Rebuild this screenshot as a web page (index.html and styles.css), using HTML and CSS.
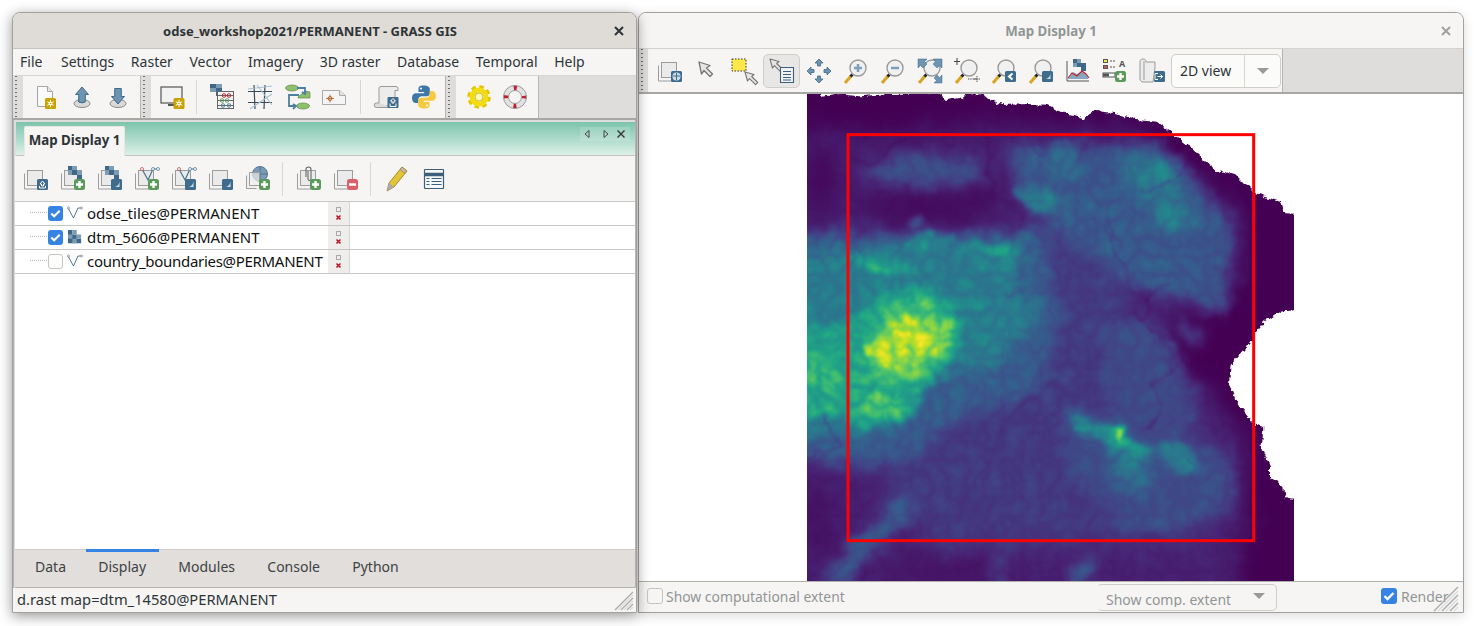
FILE: index.html
```html
<!DOCTYPE html>
<html lang="en">
<head>
<meta charset="utf-8">
<title>GRASS GIS</title>
<link rel="stylesheet" href="styles.css">
</head>
<body>
<svg class="sprite" width="0" height="0" aria-hidden="true">
  <defs>
    <g id="layers"><path d="M1.5 7.5v15.5h14" fill="none" stroke="#9c9c9c"/><rect x="4.5" y="4.5" width="15" height="15" fill="#ebebeb" stroke="#9c9c9c"/></g>
    <g id="checker"><path d="M8 0h9v4h5v9h-5V9H8z" fill="#3e6788"/><path d="M12 0h5v4h-5zM17 4h5v5h-5zM8 4h4v5H8z" fill="#7d9cb3"/></g>
    <g id="vec"><path d="M8 3l6 11 5-11h5" fill="none" stroke="#45708f" stroke-width="1.2"/><circle cx="8" cy="3" r="1.5" fill="#fff" stroke="#b04040" stroke-width=".7"/><circle cx="19" cy="3" r="1.5" fill="#fff" stroke="#45708f" stroke-width=".7"/><circle cx="24" cy="3" r="1.5" fill="#fff" stroke="#45708f" stroke-width=".7"/></g>
    <g id="plus"><rect x="14" y="13" width="11" height="11" rx="2.5" fill="#5c9a5c"/><path d="M19.5 15v7M16 18.500h7" stroke="#fff" stroke-width="2.4"/></g>
    <g id="minus"><rect x="14" y="13" width="11" height="11" rx="2.5" fill="#d9606a"/><path d="M16 18.500h7" stroke="#fff" stroke-width="2.400"/></g>
    <g id="bluebadge"><rect x="14" y="13" width="11" height="11" rx="1.500" fill="#3f6b8c"/></g>
    <g id="theme"><use href="#bluebadge"/><path d="M16 21c4 0 6-2 6.500-6v6z" fill="#cfdde7"/></g>
    <g id="upbadge"><use href="#bluebadge"/><path d="M19.500 15l2.500 3h-1.500v2h-2v-2H17zM16.500 20v2h6v-2" fill="none" stroke="#fff"/></g>
    <g id="gold"><rect x="0" y="0" width="11" height="11" rx="1.500" fill="#c9a100"/><path d="M5.500 1.800v7.400M2.300 3.600l6.400 3.800M8.700 3.600L2.300 7.400" stroke="#fff" stroke-width="1"/><circle cx="5.500" cy="5.500" r="1.800" fill="#fff"/><circle cx="5.500" cy="5.500" r=".8" fill="#c9a100"/></g>
    <g id="mag"><path d="M2 25l6-7" stroke="#d9a520" stroke-width="3"/><path d="M7.500 18.500l2-2" stroke="#222" stroke-width="3"/><circle cx="15" cy="10" r="8" fill="#f0f0f0" stroke="#9a9a9a" stroke-width="1.400"/></g>
    <g id="pointer"><path d="M1 1l9 2.500-2.300 2 6 6-2.200 2.200-6-6L3.500 10z" fill="#e6e6e6" stroke="#757575" stroke-width="1.100" stroke-linejoin="round"/></g>
    <g id="tinyflags"><rect x="3.500" y=".5" width="4" height="4" fill="#efefef" stroke="#aaa"/><rect x="3" y="8" width="5" height="5" fill="#eee"/><path d="M3.500 8.500l4 4M7.500 8.500l-4 4" stroke="#c8101a" stroke-width="1.500"/></g>
    <g id="vecmini"><path d="M1 2l5.500 10L11 2h3" fill="none" stroke="#50788f" stroke-width="1"/><circle cx="1.500" cy="2" r="1" fill="#fff" stroke="#666" stroke-width=".6"/><circle cx="14.500" cy="2" r="1" fill="#fff" stroke="#666" stroke-width=".6"/></g>

    <filter id="b34" x="-40%" y="-40%" width="180%" height="180%" color-interpolation-filters="sRGB"><feGaussianBlur stdDeviation="34"/></filter>
    <filter id="b20" x="-40%" y="-40%" width="180%" height="180%" color-interpolation-filters="sRGB"><feGaussianBlur stdDeviation="20"/></filter>
    <filter id="b11" x="-40%" y="-40%" width="180%" height="180%" color-interpolation-filters="sRGB"><feGaussianBlur stdDeviation="11"/></filter>
    <filter id="b6" x="-40%" y="-40%" width="180%" height="180%" color-interpolation-filters="sRGB"><feGaussianBlur stdDeviation="6"/></filter>
    <filter id="b2" x="-40%" y="-40%" width="180%" height="180%" color-interpolation-filters="sRGB"><feGaussianBlur stdDeviation="2.500"/></filter>

    <filter id="dem" filterUnits="userSpaceOnUse" x="-80" y="-80" width="1660" height="1660" color-interpolation-filters="sRGB">
      <feTurbulence type="fractalNoise" baseFrequency=".012" numOctaves="5" seed="11" result="warp"/>
      <feDisplacementMap in="SourceGraphic" in2="warp" scale="55" xChannelSelector="R" yChannelSelector="G" result="shape"/>
      <feTurbulence type="turbulence" baseFrequency=".018" numOctaves="4" seed="5"/>
      <feColorMatrix type="matrix" values="1 0 0 0 0  1 0 0 0 0  1 0 0 0 0  0 0 0 0 1" result="veins"/>
      <feComposite in="shape" in2="veins" operator="arithmetic" k1=".5" k2=".86" k3="0" k4="0"/>
      <feGaussianBlur stdDeviation="2.600"/>
      <feComponentTransfer>
        <feFuncR type="table" tableValues=".267 .282 .255 .208 .165 .129 .133 .267 .478 .741 .992"/>
        <feFuncG type="table" tableValues=".004 .141 .267 .373 .471 .569 .659 .749 .820 .875 .906"/>
        <feFuncB type="table" tableValues=".329 .459 .529 .553 .557 .549 .518 .439 .318 .149 .145"/>
      </feComponentTransfer>
    </filter>
    <filter id="coastline" filterUnits="userSpaceOnUse" x="-40" y="-40" width="1600" height="1600">
      <feTurbulence type="fractalNoise" baseFrequency=".05" numOctaves="3" seed="2"/>
      <feDisplacementMap in="SourceGraphic" scale="22" xChannelSelector="R" yChannelSelector="G"/>
    </filter>
    <mask id="land" maskUnits="userSpaceOnUse" x="0" y="0" width="1500" height="1500">
      <path filter="url(#coastline)" fill="#fff" d="M-30-30L60-30 60 17 110 12 180 19 250 13 420 8 440 30 490 22 505 8 545 14 610 45 680 42 740 44 790 70 850 85 880 62 950 70 1010 90 1070 95 1120 135 1180 180 1250 240 1310 260 1360 310 1440 335 1450 370 1530 372 1530 655 1440 665 1390 700 1340 770 1295 825 1290 880 1310 940 1360 1000 1390 1015 1385 1070 1410 1130 1410 1165 1450 1190 1455 1225 1530 1228 1530 1530-30 1530z"/>
    </mask>
  </defs>
</svg>

<section class="window map-window">
  <header class="titlebar titlebar-light">
    <span class="title-dim">Map Display 1</span>
    <svg class="close" viewBox="0 0 10 10"><path d="M1 1l8 8M9 1l-8 8" stroke="#a0a0a0" stroke-width="2"/></svg>
  </header>
  <div class="toolrow map-toolrow">
    <div class="toolbar map-toolbar">
      <i class="grip"></i>
      <span class="tool first"><svg viewBox="0 0 26 26"><g transform="translate(-1 0)"><use href="#layers"/><use href="#bluebadge"/><circle cx="19.500" cy="18.500" r="4" fill="#cfdde7"/><path d="M16 18h7M19.500 15v7" stroke="#3f6b8c"/></g></svg></span>
      <span class="tool"><svg viewBox="0 0 26 26"><path d="M4 4l11 3.500-3.500 2.500 6 6-2.500 2.500-6-6-2.500 3.500z" fill="#e6e6e6" stroke="#757575" stroke-width="1.300" stroke-linejoin="round"/></svg></span>
      <span class="tool"><svg viewBox="0 0 26 26"><rect x="0" y="1" width="14" height="12" fill="#ffe94a" stroke="#333" stroke-dasharray="1.500 1.500"/><g transform="translate(12 13)"><use href="#pointer"/></g></svg></span>
      <span class="tool active"><svg viewBox="0 0 26 26"><use href="#pointer"/><path d="M11.500 9.500h13v15h-13zM14 13.500h8M14 16.500h8M14 19.500h8M14 22h8" fill="#f2f2f2" stroke="#3d5f7a" stroke-width="1.100"/></svg></span>
      <span class="tool"><svg viewBox="0 0 26 26"><path d="M13 1l4 4h-2.500v3h-3V5H9zM13 25l4-4h-2.500v-3h-3v3H9zM1 13l4-4v2.500h3v3H5V17zM25 13l-4-4v2.500h-3v3h3V17z" fill="#6d94b0" stroke="#3f6b8c" stroke-width=".8"/></svg></span>
      <span class="tool"><svg viewBox="0 0 26 26"><use href="#mag"/><path d="M15 6v8M11 10h8" stroke="#7ca0ba" stroke-width="2.500"/></svg></span>
      <span class="tool"><svg viewBox="0 0 26 26"><use href="#mag"/><path d="M11 10h8" stroke="#7ca0ba" stroke-width="2.500"/></svg></span>
      <span class="tool"><svg viewBox="0 0 26 26"><use href="#mag"/><path d="M2 1h8L7.500 3.500 10 6 6 10 3.500 7.500 1 10V1zM25 1v9l-2.500-2.500L20 10l-4-4 2.500-2.500L16 1zM25 25h-8l2.500-2.500L17 20l3-3 2.500 2.500L25 17z" fill="#6d94b0" stroke="#3f6b8c" stroke-width=".5"/></svg></span>
      <span class="tool"><svg viewBox="0 0 26 26"><use href="#mag"/><path d="M2 0v7M-1 3.500h6" stroke="#444" transform="translate(1 0)"/><path d="M14 21h9M23 18v6M20 21h6" stroke="#444" stroke-dasharray="1 .7"/></svg></span>
      <span class="tool"><svg viewBox="0 0 26 26"><use href="#mag"/><rect x="14" y="13" width="11" height="11" rx="1.500" fill="#3f6b8c"/><path d="M21.500 15.500L18 18.500l3.500 3" fill="none" stroke="#fff" stroke-width="2"/></svg></span>
      <span class="tool"><svg viewBox="0 0 26 26"><use href="#mag"/><use href="#theme"/></svg></span>
      <span class="tool"><svg viewBox="0 0 26 26"><path d="M2 3v20h22" fill="none" stroke="#555"/><path d="M8 1h8v4h5v8h-5V9H8z" fill="#3e6788"/><path d="M12 1h4v4h-4zM8 5h4v4H8z" fill="#7d9cb3"/><path d="M3 21l5-7 4 2 5-3 4 3 2 3v2H3z" fill="#86a7c0"/><path d="M3 20l4-5 5 3 5-5 4 3 3 4" fill="none" stroke="#c8202a" stroke-width="1.100"/></svg></span>
      <span class="tool"><svg viewBox="0 0 26 26"><rect x="1.500" y="1.500" width="4" height="3" fill="#ffe94a" stroke="#555"/><rect x="1.500" y="7.500" width="4" height="3" fill="#c85a5a" stroke="#555"/><path d="M8 3h5M8 9h5" stroke="#555" stroke-dasharray="2 1"/><text class="legend-a" x="20" y="9">A</text><rect x="1" y="15" width="12" height="4" fill="#fff" stroke="#555"/><rect x="1" y="15.500" width="6" height="3" fill="#555"/><use href="#plus" transform="translate(-1 0)"/></svg></span>
      <span class="tool"><svg viewBox="0 0 26 26"><path d="M4 1c-2 0-3 1-3 3v17c0 2 2 3 3 3h10l2-14V4H7C7 2 6 1 4 1z" fill="#ececec" stroke="#999"/><path d="M5 3v19" stroke="#999"/><use href="#bluebadge" transform="translate(1 0)"/><path d="M19 15.500h-3v6h3M18.500 18.500h5M21.500 16.500l2 2-2 2" fill="none" stroke="#fff"/></svg></span>
      <div class="combo view-combo"><span class="combo-value">2D view</span><span class="combo-drop"><b class="arrow"></b></span></div>
    </div>
  </div>
  <div class="map-canvas">
    <svg class="dem" viewBox="21 12 1461 1461" role="img" aria-label="Elevation map">
      <g mask="url(#land)">
        <g filter="url(#dem)">
          <rect x="-80" y="-80" width="1660" height="1660" fill="#000"/>
          <g filter="url(#b34)">
            <path d="M-40 120l340 10 260-30 440 20 300 220 40 120-40 170-160 20-60 140 140 100 120 160v260l-40 213H-40z" fill="#161616"/>
            <path d="M350 880l500-130 300 170 130 220-60 210-800 30-180-180z" fill="#2a2a2a"/>
            <path d="M640 420l300-60 60 400-330 120z" fill="#2c2c2c"/>
          </g>
          <g filter="url(#b20)">
            <path d="M620 170h480l210 260-80 220-230-50-170-130-160-130z" fill="#444"/>
            <path d="M170 250l120-50 240 0 30 80-170 30z" fill="#3c3c3c"/>
            <path d="M-40 430l520 0 240 0 60 270-60 200-270 100-100 100-150 40-240-50z" fill="#484848"/>
            <path d="M790 960l320 50 180 90-20 190-270 40-190-180z" fill="#3a3a3a"/>
            <path d="M880 720l180-40 100 200 30 130-240-40z" fill="#383838"/>
            <path d="M130 1390l160-170 80-10-140 170-100 110H60z" fill="#484848"/>
            <path d="M1210 520l100 70-60 90-40-40z" fill="#3c3c3c"/>
            <path d="M810 1500l40-90 30 0-20 90z" fill="#585858"/>
            <path d="M570 1500l20-120 25 0-10 120z" fill="#3e3e3e"/>
            <path d="M1140 680l70 50-10 40-60-30z" fill="#383838"/>
          </g>
          <g filter="url(#b34)">
            <ellipse cx="380" cy="345" rx="230" ry="38" fill="#040404"/>
            <ellipse cx="60" cy="260" rx="55" ry="100" fill="#050505"/>
            <ellipse cx="50" cy="1300" rx="60" ry="110" fill="#0c0c0c"/>
            <ellipse cx="440" cy="1440" rx="190" ry="35" fill="#0c0c0c"/>
          </g>
          <g filter="url(#b20)">
            <path d="M-40 470l190 20 330-40 210 0-50 110 90 120-150 150-210 30-90 160-330 30z" fill="#686868"/>
            <path d="M800 990l50-30 110 50 120 60-30 130-80 20-70-180z" fill="#565656"/>
            <path d="M960 180l110 20 70 90 60 130-90 25-60-100-90-60z" fill="#606060"/>
          </g>
          <g filter="url(#b11)">
            <path d="M650 290l110-10 30 70-110 20z" fill="#666"/>
            <path d="M740 170l100 0 20 90-100 10z" fill="#545454"/>
            <path d="M1040 210l60 20 20 50-70 10z" fill="#6e6e6e"/>
            <path d="M1070 360l50-10 30 50-50 10z" fill="#6e6e6e"/>
            <path d="M320 395l50-15 10 25-50 10z" fill="#4a4a4a"/>
            <path d="M1080 1050l70 10 40 50-50 60-50-50z" fill="#626262"/>
          </g>
          <g filter="url(#b11)">
            <path d="M-40 720l170-20 120-80 130-50 90 90 20 120-100 100-70 100-130 40-80-50-170 20z" fill="#909090"/>
            <path d="M160 490l50-10 60 45 90 0 0 18-110 8-90-10z" fill="#8a8a8a"/>
            <path d="M310 452l150-20-20 22-120 16z" fill="#868686"/>
            <path d="M540 472l110-12 10 20-120 16z" fill="#868686"/>
            <path d="M820 975l50 20 90 35 90 45-20 15-100-25-100-50z" fill="#808080"/>
            <path d="M990 1060l35 15-10 70-35-10z" fill="#707070"/>
            <path d="M1130 1070l25 10 5 50-35 15z" fill="#727272"/>
            <path d="M-40 800l160-25 10 120-170 15z" fill="#a0a0a0"/>
          </g>
          <g filter="url(#b11)">
            <path d="M180 750l75-95 125-20 75 60-10 90-85 75-105 30-55-50z" fill="#b4b4b4"/>
            <path d="M200 905l75 10 35 40-60 30-55-35z" fill="#b0b0b0"/>
            <path d="M190 528l130-2 15 12-130 10z" fill="#a2a2a2"/>
            <path d="M595 478l40-10 10 12-40 12z" fill="#a8a8a8"/>
            <path d="M915 1015l50 10 50 35-15 12-80-35z" fill="#a4a4a4"/>
          </g>
          <g filter="url(#b6)">
            <path d="M250 710l45-35 85 15 70 12-20 75-90 55-70 20-60-55 10-55z" fill="#d2d2d2"/>
          </g>
          <g filter="url(#b6)">
            <path d="M270 728l55-20 65 12-55 40-55 8z" fill="#eee"/>
            <ellipse cx="208" cy="790" rx="30" ry="24" fill="#e2e2e2"/>
            <ellipse cx="960" cy="1035" rx="14" ry="12" fill="#d0d0d0"/>
          </g>
          <g filter="url(#b2)">
            <ellipse cx="312" cy="731" rx="26" ry="11" fill="#fff"/>
            <ellipse cx="365" cy="725" rx="18" ry="7" fill="#f4f4f4"/>
          </g>
          <g fill="none" stroke="#000" stroke-opacity=".4" stroke-width="6" filter="url(#b2)">
            <path d="M545 130l20 60 10 80-10 60M690 130l20 80M860 140l-10 70"/>
            <path d="M925 340l15 80 10 60 20 70 20 50 60 40 50-70M1000 665l60 50 60 60 20 30-50 60-30 20 20 70-40 50"/>
            <path d="M1180 180l-30 60-60 50-80 10"/>
            <path d="M760 880l-100 80-60 60-20 60-60 110-50 100" stroke-opacity=".2"/>
            <path d="M60 970l30 50 20 50-60 30-30 10M150 200l60 30 40-40 80-50"/>
            <path d="M620 610l60-20M1050 610l10 50-30 40"/>
          </g>
        </g>
      </g>
      <rect class="region" x="144" y="134" width="1217" height="1218"/>
    </svg>
  </div>
  <footer class="statusbar map-status">
    <label class="check-label dim"><i class="check off dim-check"></i>Show computational extent</label>
    <div class="combo extent-combo"><span class="extent-clip">Show comp. extent</span><b class="arrow extent-arrow"></b></div>
    <label class="check-label render"><i class="check on"><svg viewBox="0 0 16 16"><path d="M3.500 8l3 3 6-6" fill="none" stroke="#fff" stroke-width="2.300"/></svg></i>Render</label>
    <svg class="grip-corner" viewBox="0 0 26 26"><path d="M1 25L25 1M9 25L25 9M17 25l8-8" stroke="#a9a9a9" stroke-width="1.300"/><path d="M5 25L25 5M13 25l12-12M21 25l4-4" stroke="#dcdcdc" stroke-width="1.300"/></svg>
  </footer>
</section>

<section class="window main-window">
  <header class="titlebar">
    <span class="title-main">odse_workshop2021/PERMANENT - GRASS GIS</span>
    <svg class="close" viewBox="0 0 10 10"><path d="M1 1l8 8M9 1l-8 8" stroke="#2e3436" stroke-width="2"/></svg>
  </header>
  <nav class="menubar">
    <span>File</span><span>Settings</span><span>Raster</span><span>Vector</span><span>Imagery</span><span>3D raster</span><span>Database</span><span>Temporal</span><span>Help</span>
  </nav>
  <div class="toolrow main-toolrow">
    <div class="toolbar tb-a">
      <i class="grip"></i>
      <span class="tool first"><svg viewBox="0 0 26 26"><path d="M4.500 2.500h10l5 5v15h-15z" fill="#fafafa" stroke="#a5a5a5"/><path d="M14.500 2.500v5h5" fill="#e5e5e5" stroke="#a5a5a5"/><use href="#gold" transform="translate(12 14)"/></svg></span>
      <span class="tool"><svg viewBox="0 0 26 26"><ellipse cx="13" cy="19.500" rx="8" ry="4" fill="#d9d9d9" stroke="#8a8a8a"/><path d="M13 3l6.500 7.500h-3.200v7.500q-3.300 1.800-6.600 0v-7.500H6.500z" fill="#6d94b0" stroke="#3f6b8c"/></svg></span>
      <span class="tool"><svg viewBox="0 0 26 26"><ellipse cx="13" cy="19.500" rx="8" ry="4" fill="#d9d9d9" stroke="#8a8a8a"/><path d="M13 20l6.500-7.500h-3.200V4.500h-6.600v8H6.500z" fill="#6d94b0" stroke="#3f6b8c"/></svg></span>
    </div>
    <div class="toolbar tb-b">
      <i class="grip"></i>
      <span class="tool second"><svg viewBox="0 0 26 26"><rect x="2" y="3" width="21" height="16" fill="#f2f2f2" stroke="#555" stroke-width="1.200"/><path d="M9 21h7" stroke="#555" stroke-width="2"/><use href="#gold" transform="translate(14.500 14)"/></svg></span>
      <i class="sep"></i>
      <span class="tool"><svg viewBox="0 0 26 26"><path d="M1 0h6v4h6v8H7V8H1z" fill="#3e6788"/><path d="M7 0h6v4H7zM1 4h6v4H1z" fill="#7d9cb3"/><rect x="8.500" y="7.500" width="16" height="17" fill="#f3f3f3" stroke="#666"/><path d="M9 11.500h15M9 16.500h15M9 21.500h15" stroke="#666"/><circle cx="15" cy="11.500" r="1.800" fill="none" stroke="#c8202a"/><circle cx="20" cy="11.500" r="1.800" fill="none" stroke="#c8202a"/><circle cx="13" cy="16.500" r="1.800" fill="none" stroke="#68a468"/><circle cx="18" cy="16.500" r="1.800" fill="none" stroke="#68a468"/><circle cx="14" cy="21.500" r="1.800" fill="none" stroke="#5585aa"/><circle cx="20" cy="21.500" r="1.800" fill="none" stroke="#5585aa"/></svg></span>
      <span class="tool"><svg viewBox="0 0 26 26"><g transform="translate(1 0)"><path d="M7 1l1 24M18 1l-1 24M1 7.500h24M1 18.500h24" stroke="#3a4a55" stroke-width="1.200"/><path d="M1 5l24-3M3 25L25 10M10 1l15 20" stroke="#a7c2d4" stroke-width="1.100"/></g></svg></span>
      <span class="tool"><svg viewBox="0 0 26 26"><g transform="translate(1 0)"><ellipse cx="7" cy="4" rx="6.500" ry="3" fill="#8ec06c" stroke="#5c8a45" stroke-width=".7"/><path d="M13 14h12v-6l-5-1-7 6z" fill="#8ec06c" stroke="#5c8a45" stroke-width=".7"/><ellipse cx="18" cy="22" rx="6.500" ry="3" fill="#8ec06c" stroke="#5c8a45" stroke-width=".7"/><path d="M12 4h8v6M21 7l-1 3-3-2M14 11H4v11h6M8 20l3 2-3 3" fill="none" stroke="#4f7fa3" stroke-width="1.800"/></g></svg></span>
      <span class="tool"><svg viewBox="0 0 26 26"><path d="M1.500 6.500h17l6 5v9h-23z" fill="#f5f5f5" stroke="#aaa"/><path d="M18.500 6.500v5h6" fill="#e5e5e5" stroke="#aaa"/><circle cx="9" cy="14.500" r="2" fill="none" stroke="#b5642a"/><path d="M9 10.500v8M5 14.500h8" stroke="#b5642a" stroke-width=".8"/></svg></span>
      <i class="sep wide"></i>
      <span class="tool"><svg viewBox="0 0 26 26"><path d="M7 2.500h15a2 2 0 0 1 2 2v2h-3v15H5v-17a2 2 0 0 1 2-2z" fill="#ececec" stroke="#999"/><path d="M5 19H2.500a2 2 0 0 0 0 4.500H20" fill="#ddd" stroke="#999"/><rect x="13.500" y="13" width="11" height="11" rx="1" fill="#3f6b8c"/><path d="M19 14.500l2.500 2.500h-1.500v2h-2v-2h-1.500zM16 19.500v3h6v-3" fill="none" stroke="#fff"/></svg></span>
      <span class="tool"><svg viewBox="0 0 26 26"><path d="M13 1.500c-5.500 0-5.500 2-5.500 3.500v3h5.700v1.200H5c-2.500 0-4 1.800-4 4.800s1.500 5 4 5h2.300v-3.200c0-2 1.600-3.500 3.500-3.500h5c1.700 0 3-1.300 3-3V5c0-2.200-2.500-3.500-5.800-3.500z" fill="#3f76a8"/><path d="M13 24.500c5.500 0 5.500-2 5.500-3.500v-3h-5.700v-1.200H21c2.500 0 4-1.800 4-4.800s-1.500-5-4-5h-2.300v3.200c0 2-1.600 3.500-3.500 3.500h-5c-1.700 0-3 1.300-3 3V21c0 2.200 2.500 3.500 5.800 3.500z" fill="#f7c93e"/><circle cx="10" cy="4.500" r="1" fill="#fff"/><circle cx="16" cy="21.500" r="1" fill="#fff"/></svg></span>
    </div>
    <div class="toolbar tb-c">
      <i class="grip"></i>
      <span class="tool third"><svg viewBox="0 0 26 26"><circle cx="13" cy="13" r="10" fill="none" stroke="#e3c400" stroke-width="3.500" stroke-dasharray="4.400 3.450"/><circle cx="13" cy="13" r="7" fill="none" stroke="#f3dc10" stroke-width="5"/><circle cx="13" cy="13" r="4" fill="#fff9b8" stroke="#b8a200" stroke-width=".7"/></svg></span>
      <span class="tool"><svg viewBox="0 0 26 26"><circle cx="13" cy="13" r="9" fill="none" stroke="#e2e2e2" stroke-width="5"/><circle cx="13" cy="13" r="9" fill="none" stroke="#c0202a" stroke-width="5" stroke-dasharray="3 11.140" stroke-dashoffset="1.500"/><circle cx="13" cy="13" r="11.500" fill="none" stroke="#999"/><circle cx="13" cy="13" r="6.500" fill="none" stroke="#999"/></svg></span>
    </div>
  </div>

  <div class="notebook-body">
    <div class="aui-head">
      <div class="aui-tab">Map Display 1</div>
      <div class="aui-ctrls">
        <svg viewBox="0 0 6 8"><path d="M5 .5v7L1 4z" fill="none" stroke="#444"/></svg>
        <svg viewBox="0 0 6 8"><path d="M1 .5v7L5 4z" fill="none" stroke="#444"/></svg>
        <svg viewBox="0 0 8 8"><path d="M.5.500l7 7M7.500.500l-7 7" stroke="#333" stroke-width="1.400"/></svg>
      </div>
    </div>
    <div class="layer-toolbar">
      <span class="tool"><svg viewBox="0 0 26 26"><use href="#layers"/><use href="#upbadge"/></svg></span>
      <span class="tool"><svg viewBox="0 0 26 26"><use href="#layers"/><use href="#checker"/><use href="#plus"/></svg></span>
      <span class="tool"><svg viewBox="0 0 26 26"><use href="#layers"/><use href="#checker"/><use href="#theme"/></svg></span>
      <span class="tool"><svg viewBox="0 0 26 26"><use href="#layers"/><use href="#vec"/><use href="#plus"/></svg></span>
      <span class="tool"><svg viewBox="0 0 26 26"><use href="#layers"/><use href="#vec"/><use href="#theme"/></svg></span>
      <span class="tool"><svg viewBox="0 0 26 26"><use href="#layers"/><use href="#theme"/></svg></span>
      <span class="tool"><svg viewBox="0 0 26 26"><circle cx="15" cy="8" r="7.500" fill="#7a9ab5" stroke="#55788f"/><path d="M7.500 8h15M15 .5v15" stroke="#55788f"/><path d="M1.500 9.500v13h10M4.500 6.500h10v13h-10z" fill="#ececec" fill-opacity=".7" stroke="#9c9c9c"/><use href="#plus"/></svg></span>
      <i class="sep"></i>
      <span class="tool"><svg viewBox="0 0 26 26"><use href="#layers"/><path d="M10 11V3.500a2.500 2.500 0 0 1 5 0V13a1.500 1.500 0 0 1-3 0V5" fill="none" stroke="#666" stroke-width="1.100"/><use href="#plus"/></svg></span>
      <span class="tool"><svg viewBox="0 0 26 26"><use href="#layers"/><use href="#minus"/></svg></span>
      <i class="sep"></i>
      <span class="tool"><svg viewBox="0 0 26 26"><path d="M3 25l2-8L18 1l5 4L10 21z" fill="#e3c437" stroke="#8d7a20" stroke-width=".8"/><path d="M18 1l5 4-2 2.500-5-4z" fill="#cdb5b0" stroke="#8d7a20" stroke-width=".6"/><path d="M3 25l2-8 5 4z" fill="#aaa"/></svg></span>
      <span class="tool"><svg viewBox="0 0 26 26"><rect x="3.500" y="3.500" width="19" height="19" rx=".5" fill="#f5f7f9" stroke="#3d5f7a" stroke-width="1.200"/><path d="M4 8.500h18" stroke="#3d5f7a" stroke-width="3.500"/><path d="M5.500 12.500h3M10.500 12.500h10M5.500 15.500h3M10.500 15.500h10M5.500 18.500h3M10.500 18.500h10" stroke="#3d5f7a"/></svg></span>
    </div>
    <div class="tree">
      <div class="tree-row">
        <i class="dots"></i><i class="check on"><svg viewBox="0 0 16 16"><path d="M3.500 8l3 3 6-6" fill="none" stroke="#fff" stroke-width="2.300"/></svg></i>
        <svg class="layer-type" viewBox="0 0 16 14"><use href="#vecmini"/></svg>
        <span class="layer-name">odse_tiles@PERMANENT</span>
        <span class="layer-ctrl"><svg viewBox="0 0 11 14"><use href="#tinyflags"/></svg></span>
      </div>
      <div class="tree-row">
        <i class="dots"></i><i class="check on"><svg viewBox="0 0 16 16"><path d="M3.500 8l3 3 6-6" fill="none" stroke="#fff" stroke-width="2.300"/></svg></i>
        <svg class="layer-type" viewBox="0 0 16 16"><path d="M0 0h5v5h5v5h5v5H0z" fill="#3e6788"/><path d="M5 0h5v5H5zM10 5h5v5h-5zM0 5h5v5H0zM5 10h5v5H5z" fill="#7d9cb3"/></svg>
        <span class="layer-name">dtm_5606@PERMANENT</span>
        <span class="layer-ctrl"><svg viewBox="0 0 11 14"><use href="#tinyflags"/></svg></span>
      </div>
      <div class="tree-row">
        <i class="dots"></i><i class="check off"></i>
        <svg class="layer-type" viewBox="0 0 16 14"><use href="#vecmini"/></svg>
        <span class="layer-name tight">country_boundaries@PERMANENT</span>
        <span class="layer-ctrl"><svg viewBox="0 0 11 14"><use href="#tinyflags"/></svg></span>
      </div>
    </div>
    <div class="tabs">
      <span class="tab">Data</span><span class="tab current">Display</span><span class="tab">Modules</span><span class="tab">Console</span><span class="tab">Python</span>
    </div>
  </div>
  <footer class="statusbar main-status">
    <span>d.rast map=dtm_14580@PERMANENT</span>
    <svg class="grip-corner" viewBox="0 0 20 20"><path d="M1 19L19 1M7 19L19 7M13 19l6-6" stroke="#a9a9a9" stroke-width="1.200"/><path d="M4 19L19 4M10 19l9-9M16 19l3-3" stroke="#dcdcdc" stroke-width="1.200"/></svg>
  </footer>
</section>
</body>
</html>
```
FILE: styles.css
```css
* { box-sizing: border-box; }
html, body { margin: 0; height: 100%; }
body {
  position: relative;
  overflow: hidden;
  background: #fff;
  font-family: "Noto Sans", "Open Sans", sans-serif;
  font-size: 14px;
  color: #2e3436;
}
.sprite { position: absolute; }

.window {
  position: absolute;
  top: 12px;
  height: 601px;
  display: flex;
  flex-direction: column;
  background: #f6f5f4;
  border: 1px solid #a3a19e;
  border-radius: 8px 8px 0 0;
  overflow: hidden;
}
.main-window { left: 12px; width: 625px; box-shadow: 0 3px 13px rgba(0, 0, 0, .42); }
.map-window { left: 638px; width: 826px; box-shadow: 0 3px 12px rgba(0, 0, 0, .14); }

.titlebar {
  flex: none;
  height: 36px;
  display: flex;
  align-items: center;
  justify-content: center;
  position: relative;
  background: #dfdcd8;
  border-bottom: 1px solid #c6c2bd;
}
.titlebar-light { background: #f6f5f4; border-bottom-color: #d5d2ce; }
.title-main { font-weight: 700; font-size: 13px; color: #2e3436; padding-right: 29px; }
.title-dim { font-weight: 700; font-size: 13.300px; color: #929595; }
.close { position: absolute; right: 12px; top: 13px; width: 10px; height: 10px; }

.menubar {
  flex: none;
  height: 27px;
  display: flex;
  align-items: center;
  padding-bottom: 2px;
  background: #f6f5f4;
  border-bottom: 1px solid #d9d7d4;
}
.menubar span { padding: 0 8.300px; }
.menubar span:first-child { padding: 0 10.300px 0 7px; }

.toolrow {
  flex: none;
  display: flex;
  background: #dedddb;
  border-bottom: 2px solid #a9a7a4;
}
.main-toolrow { height: 44px; }
.map-toolrow { height: 45px; }
.toolbar {
  display: flex;
  align-items: center;
  background: #f6f5f4;
  border-right: 1px solid #b7b5b2;
}
.grip {
  flex: none;
  align-self: stretch;
  width: 10px;
  background-color: #dedddb;
  background-image: radial-gradient(circle at 3px 1.500px, #6e6e6e 1px, transparent 1.100px);
  background-size: 6px 4px;
  background-repeat: repeat-y;
  background-position: 0 3px;
  margin-right: 5px;
}
.tb-a { width: 128px; }
.tb-b { width: 305px; }
.tb-c { width: 93px; }
.map-toolbar { width: 644px; }
.tool {
  flex: none;
  width: 37.500px;
  height: 34px;
  display: flex;
  align-items: center;
  justify-content: center;
  border: 1px solid transparent;
  border-radius: 5px;
}
.tool svg { width: 26px; height: 26px; overflow: visible; }
.tool.active { background: #e8e7e5; border-color: #d0cec9; }
.sep { flex: none; width: 1px; height: 34px; margin: 0 6px; background: #d9d7d4; }
.sep.wide { margin: 0 7px 0 7px; }

.tb-a .tool { width: 36px; }
.tb-b .tool.second { width: 36px; margin-left: -2px; }
.tb-c .tool { width: 36px; }

.map-toolbar .grip { width: 9px; margin-right: 4px; }
.map-toolbar .tool { width: 37px; }
.legend-a { font: 700 9px "Noto Sans", sans-serif; fill: #555; text-anchor: middle; }

.combo {
  border: 1px solid #d0cec9;
  border-radius: 5px;
  background: #f6f5f4;
  color: #2e3436;
}
.view-combo {
  flex: none;
  display: flex;
  align-items: stretch;
  width: 110px;
  height: 34px;
  margin-left: 1px;
  background: #fbfbfa;
}
.combo-value { flex: 1; display: flex; align-items: center; padding-left: 8px; }
.combo-drop { width: 36px; display: flex; align-items: center; justify-content: center; border-left: 1px solid #d9d7d4; }
.arrow { display: block; width: 0; height: 0; border: 6px solid transparent; border-top: 6px solid #999; border-bottom: 0; }

.map-canvas {
  flex: none;
  height: 487px;
  background: #fff;
  display: flex;
  padding-left: 168px;
}
.dem { flex: none; width: 487px; height: 487px; overflow: hidden; display: block; }
.region { fill: none; stroke: #ff0000; stroke-width: 9; }

.statusbar { position: relative; flex: none; background: #f6f5f4; }
.map-status {
  flex: 1;
  display: flex;
  border-top: 1px solid #b0aeab;
}
.check-label { position: absolute; top: 6px; display: flex; align-items: center; gap: 4px; height: 16px; }
.check-label.dim { left: 8px; gap: 3px; color: #929595; font-size: 13.900px; }
.check-label.render { left: 742px; color: #929595; }
.check {
  flex: none;
  display: block;
  width: 15px;
  height: 15px;
  border-radius: 3px;
}
.check-label .check { width: 16px; height: 16px; }
.check svg { display: block; width: 100%; height: 100%; }
.check.on { background: #3584e4; }
.check.off { background: #fdfdfc; border: 1px solid #c8c5c0; }
.check.dim-check { background: #f6f5f4; }
.extent-combo {
  position: absolute;
  left: 458px;
  top: 2px;
  width: 180px;
  height: 27px;
  border-left-color: transparent;
  color: #929595;
}
.extent-clip { position: absolute; left: 8px; top: 3px; height: 19px; line-height: 23px; overflow: hidden; white-space: nowrap; }
.extent-arrow { position: absolute; right: 11px; top: 8px; }

.grip-corner { position: absolute; right: 2px; bottom: 1px; }
.map-status .grip-corner { width: 26px; height: 26px; right: 4px; bottom: 0; }

.notebook-body {
  flex: none;
  height: 468px;
  display: flex;
  flex-direction: column;
  padding: 2px 0 0 1px;
  background: #dedddb;
  border-right: 1px solid #b5b3b0;
  border-left: 1px solid #b5b3b0;
}
.aui-head {
  flex: none;
  position: relative;
  height: 34px;
  margin-left: 1px;
  padding: 4px 0 0 8px;
  display: flex;
  background: linear-gradient(#7cc4ac, #dcf0e8);
  border-bottom: 1px solid #c6c4c1;
}
.aui-tab {
  width: 101px;
  height: 30px;
  padding-bottom: 4px;
  display: flex;
  align-items: center;
  justify-content: center;
  font-weight: 700;
  font-size: 13.300px;
  background: #f6f5f4;
  border: 1px solid #e8e7e5;
  border-bottom: 0;
  border-radius: 2px 2px 0 0;
  color: #2e3436;
}
.aui-ctrls {
  position: absolute;
  right: 5px;
  top: 5px;
  height: 14px;
  padding: 0 5px 0 4px;
  display: flex;
  align-items: center;
  gap: 13px;
  background: rgba(255, 255, 255, .14);
}
.aui-ctrls svg { display: block; width: 6px; height: 8px; }
.aui-ctrls svg:last-child { width: 8px; margin-left: -5px; }
.layer-toolbar {
  flex: none;
  height: 45px;
  display: flex;
  align-items: center;
  padding-left: 2px;
  background: #f6f5f4;
}
.layer-toolbar .tool { width: 37px; }
.layer-toolbar .sep { margin: 0 7px 0 6px; height: 34px; }
.tree {
  flex: 1;
  background: #fff;
  border-top: 1px solid #c8c6c2;
}
.tree-row {
  position: relative;
  height: 24px;
  display: flex;
  align-items: center;
  padding: 0 0 2px 15px;
  border-bottom: 1px solid #c8c6c2;
  color: #111;
  font-size: 15px;
}
.dots { flex: none; width: 17px; border-top: 1px dotted #b5b5b5; }
.tree-row .check { margin-left: 1px; margin-top: 1px; }
.layer-type { flex: none; width: 16px; height: 14px; margin-left: 4px; }
.layer-name { margin-left: 4px; white-space: nowrap; }
.layer-name.tight { letter-spacing: -.3px; }
.layer-ctrl {
  position: absolute;
  left: 312px;
  top: 0;
  width: 23px;
  height: 23px;
  background: #efeeec;
  display: flex;
  align-items: center;
  justify-content: center;
  border-left: 1px solid #fff;
  border-right: 1px solid #d8d6d3;
}
.layer-ctrl svg { width: 11px; height: 14px; }

.tabs {
  flex: none;
  height: 39px;
  display: flex;
  background: #e1dedb;
  border-top: 1px solid #cfccc8;
  border-bottom: 1px solid #b5b3b0;
}
.tab { padding: 0 16px 4px; display: flex; align-items: center; color: #3d4244; }
.tab:first-child { padding-left: 20px; }
.tab + .tab { margin-left: .300px; }
.tab.current { position: relative; }
.tab.current::before { content: ""; position: absolute; left: 4px; right: 3px; top: -1px; height: 3px; background: #3584e4; }

.main-status {
  flex: 1;
  display: flex;
  align-items: center;
  padding: 0 0 2px 4px;
  font-size: 14.700px;
}
.main-status .grip-corner { width: 20px; height: 20px; }
```
